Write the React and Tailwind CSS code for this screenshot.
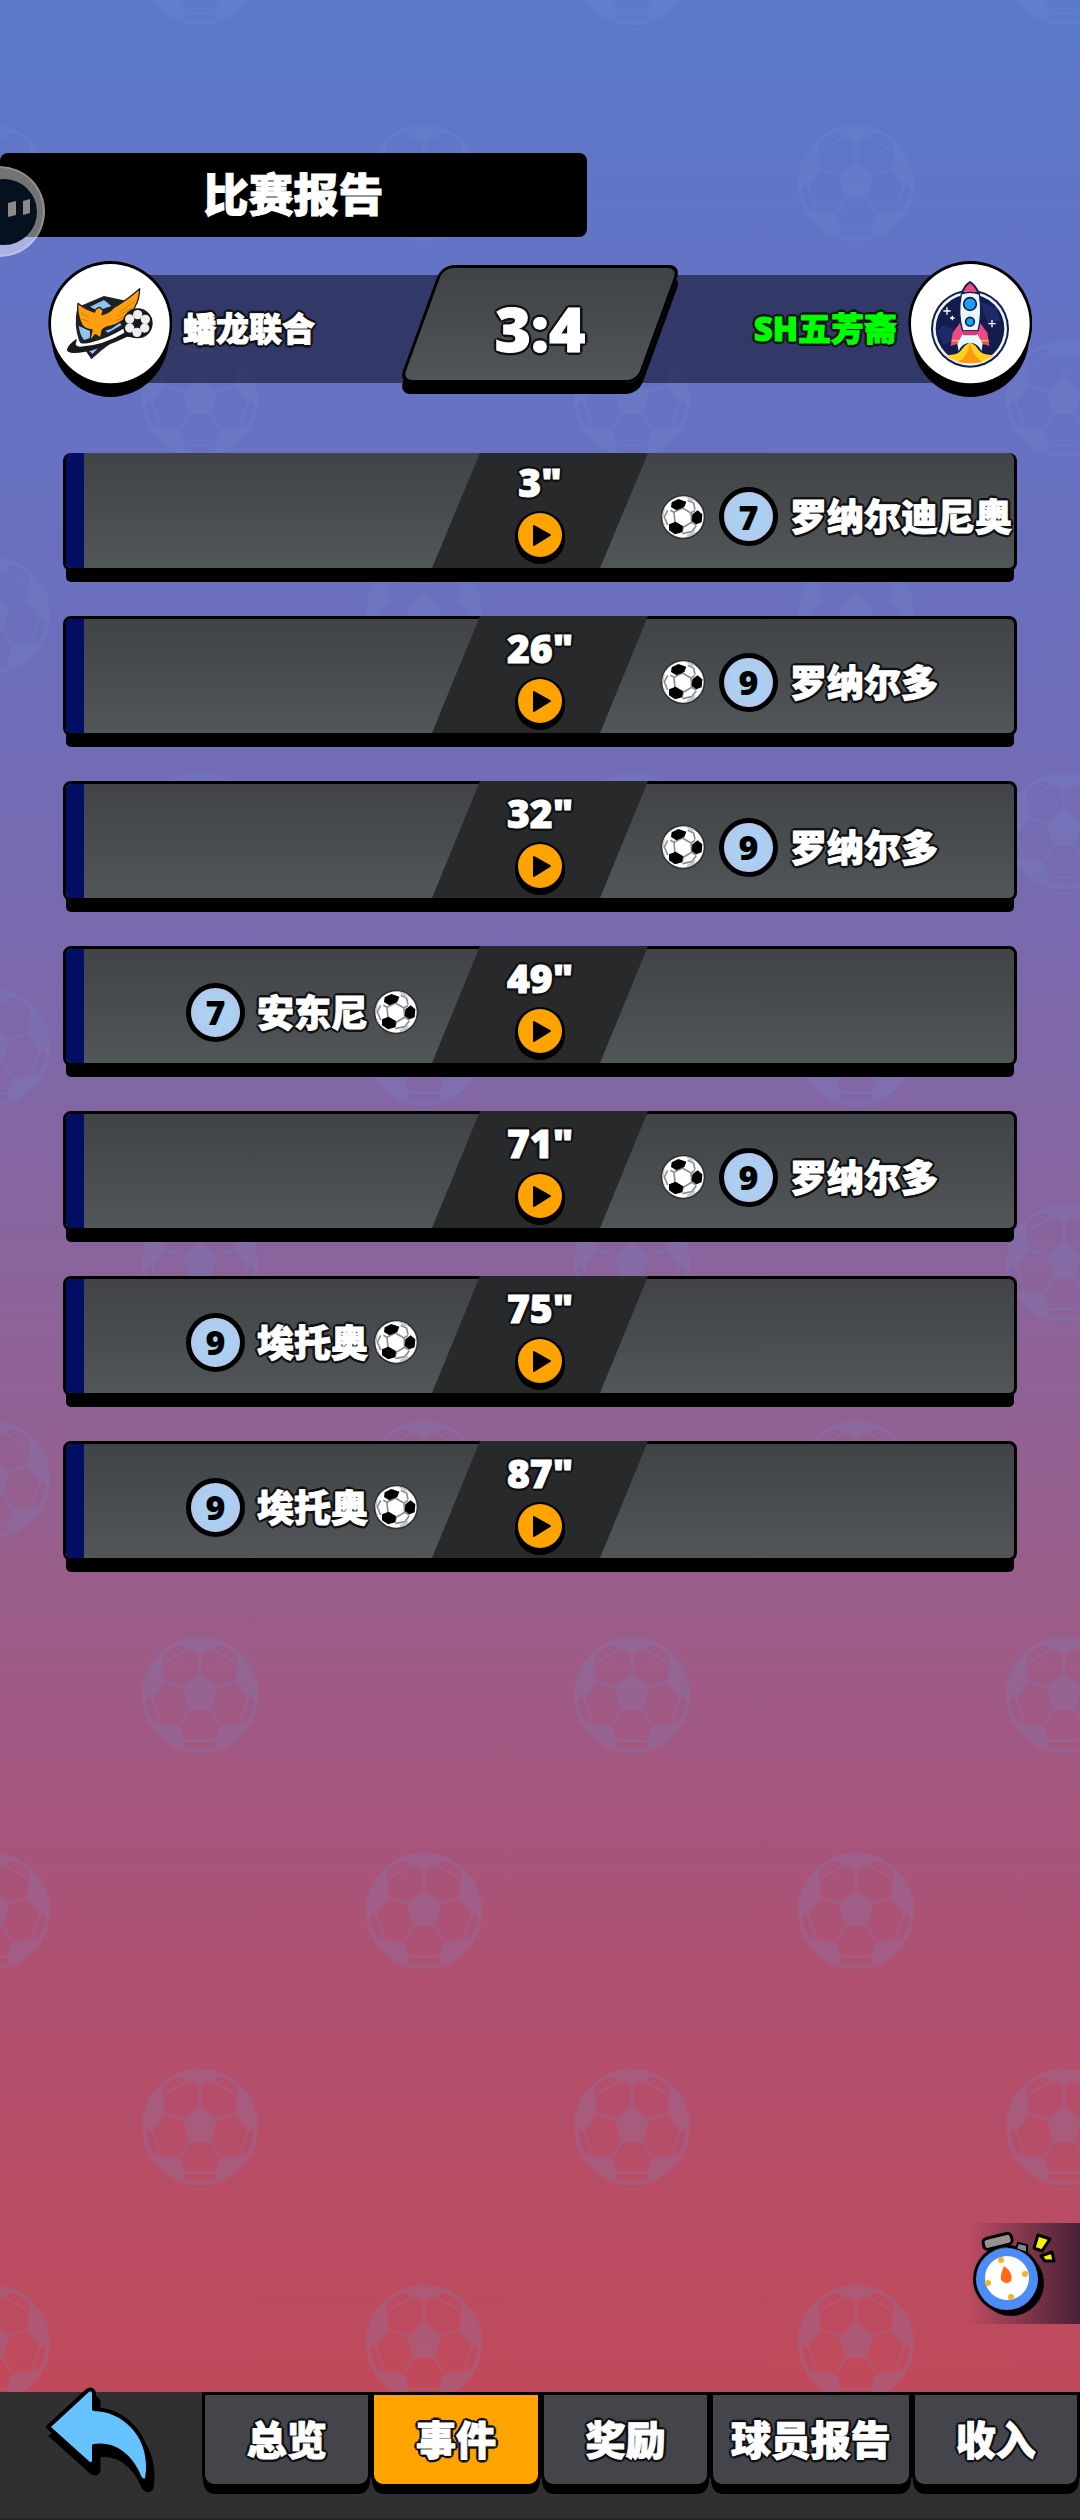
import React from 'react';
import clsx from 'clsx';

const events = [
  { minute: 3, side: 'away', number: 7, name: '罗纳尔迪尼奥' },
  { minute: 26, side: 'away', number: 9, name: '罗纳尔多' },
  { minute: 32, side: 'away', number: 9, name: '罗纳尔多' },
  { minute: 49, side: 'home', number: 7, name: '安东尼' },
  { minute: 71, side: 'away', number: 9, name: '罗纳尔多' },
  { minute: 75, side: 'home', number: 9, name: '埃托奥' },
  { minute: 87, side: 'home', number: 9, name: '埃托奥' },
];

const tabs = [
  { label: '总览', width: 'flex-[169]' },
  { label: '事件', width: 'flex-[169]', active: true },
  { label: '奖励', width: 'flex-[169]' },
  { label: '球员报告', width: 'flex-[202]' },
  { label: '收入', width: 'flex-[168]' },
];

// Fattens the glyphs a little and puts a dark rim around them
const outline =
  '[-webkit-text-stroke:1px_currentColor] [text-shadow:3px_0_#101114,-3px_0_#101114,0_3px_#101114,0_-3px_#101114,2px_2px_#101114,-2px_2px_#101114,2px_-2px_#101114,-2px_-2px_#101114]';

// One faint ball, drawn around its own centre
function FaintBall({ x, y }) {
  return (
    <g transform={`translate(${x} ${y})`}>
      <circle r="56" fill="none" stroke="#758fd0" strokeWidth="4" />
      <g fill="#758fd0">
        <path d="M0-21 17-8 11 15H-11L-17-8Z" />
        <path d="M-20-52Q0-60 20-52L12-46 0-42-12-46Z" />
        <path d="M37-40Q54-24 55 3L48 4 36-11Z" />
        <path d="M-37-40Q-54-24-55 3L-48 4-36-11Z" />
        <path d="M20 31 40 28 49 27Q38 48 18 54L14 46Z" />
        <path d="M-20 31-40 28-49 27Q-38 48-18 54L-14 46Z" />
      </g>
      <path
        d="M0-21V-43M17-8 37-14M-17-8-37-14M11 15 20 31M-11 15-20 31M-14 46H14M12-46 35-33M-12-46-35-33M48 4 40 28M-48 4-40 28"
        fill="none"
        stroke="#758fd0"
        strokeWidth="2"
      />
    </g>
  );
}

function BallPattern() {
  return (
    <svg className="absolute inset-0 h-full w-full opacity-20" aria-hidden="true">
      <defs>
        <pattern id="balls" width="432" height="432" patternUnits="userSpaceOnUse">
          <FaintBall x={424} y={183} />
          <FaintBall x={-8} y={183} />
          <FaintBall x={200} y={399} />
          <FaintBall x={200} y={-33} />
        </pattern>
      </defs>
      <rect width="100%" height="100%" fill="url(#balls)" />
    </svg>
  );
}

function Badge({ children }) {
  return (
    <svg viewBox="24 31 372 408" className="relative z-10 h-[136px] w-[124px] shrink-0" aria-hidden="true">
      <ellipse cx="211" cy="254" rx="177" ry="185" />
      <ellipse cx="211" cy="217" rx="186" ry="186" />
      <ellipse cx="211" cy="219" rx="178" ry="179" fill="#fff" />
      {children}
    </svg>
  );
}

function EagleLogo() {
  return (
    <Badge>
      <path d="M192 136 112 170Q100 225 118 272L154 326 186 298 262 240 258 150Z" fill="#1d2026" />
      <path d="M192 148 150 168 172 180 214 166Z" fill="#8fc4f2" />
      <path d="M116 226Q120 254 132 268L150 262 150 240ZM196 240 214 234 240 216 244 224 204 246ZM148 302 176 290 158 310Z" fill="#8fc4f2" />
      <path d="M110 264Q78 286 81 300 92 312 132 304 190 292 262 258L290 262 258 224Q200 258 140 282 104 290 110 264Z" fill="#17191d" />
      <path d="M114 268Q110 284 150 276 205 262 250 234L253 246Q190 284 120 288 98 286 114 268Z" fill="#fff" />
      <path
        d="M114 158Q138 178 164 184 166 172 180 170L190 180 186 192Q206 188 222 170 264 146 299 114 298 146 286 166 278 188 258 202 236 220 214 226 192 230 186 240L182 262 166 252 148 274 156 238Q128 236 122 214 110 184 114 158Z"
        fill="#ff9f10"
        stroke="#1d2026"
        strokeWidth="4"
        strokeLinejoin="round"
      />
      <path d="M240 184 284 152M232 198 276 172M228 210 258 194M124 186 144 198M126 206 146 212" stroke="#b96a06" strokeWidth="2" />
      <circle cx="293" cy="218" r="45" fill="#17191d" />
      <g fill="#eceef0">
        <circle cx="293" cy="192" r="14" />
        <circle cx="316" cy="206" r="14" />
        <circle cx="314" cy="232" r="14" />
        <circle cx="291" cy="245" r="14" />
        <circle cx="269" cy="232" r="14" />
        <circle cx="269" cy="205" r="14" />
      </g>
      <path d="M293 206 304 214 300 227H286L281 214Z" fill="#17191d" />
    </Badge>
  );
}

function RocketLogo() {
  return (
    <Badge>
      <circle cx="210" cy="234" r="117" fill="#141b4d" />
      <circle cx="210" cy="234" r="111" fill="#e8f6ff" />
      <circle cx="210" cy="234" r="103" fill="#141b4d" />
      <path d="M110 240 134 222 158 236V270L130 282ZM238 150 290 172 300 210 262 216Z" fill="#1d2a68" />
      <path d="M136 312Q172 316 184 298 196 280 210 276 226 280 236 298 250 316 284 312 254 338 210 338 166 338 136 312Z" fill="#ffd21f" />
      <path d="M174 334Q204 318 210 278 218 318 248 334 210 342 174 334Z" fill="#ff9a10" />
      <path d="M186 128Q192 106 210 94 228 106 236 128Z" fill="#e94b87" stroke="#141b4d" strokeWidth="6" strokeLinejoin="round" />
      <path d="M180 216 158 246 152 286 178 278 190 252ZM240 216 262 246 268 286 242 278 230 252Z" fill="#e94b87" />
      <path d="M155 270H180M240 270H266" stroke="#ffb21f" strokeWidth="5" />
      <path d="M188 250 172 280 176 302Q184 278 210 276 236 278 244 302L248 280 232 250Z" fill="#e8f6ff" />
      <path d="M184 130Q210 120 238 130 248 190 234 240H188Q172 190 184 130Z" fill="#e8f6ff" stroke="#141b4d" strokeWidth="4" />
      <path d="M186 240H234L230 254H190Z" fill="#d43c74" />
      <circle cx="210" cy="160" r="19" fill="#18a0f0" stroke="#141b4d" strokeWidth="5" />
      <circle cx="210" cy="213" r="13" fill="#18a0f0" stroke="#141b4d" strokeWidth="5" />
      <path d="M141 170V192M130 181H152M157 195V209M150 202H164M276 208V230M265 219H287" stroke="#fff" strokeWidth="4" />
    </Badge>
  );
}

function GoalBall() {
  return (
    <svg viewBox="-69 -69 138 138" className="size-[46px] shrink-0" role="img" aria-label="进球">
      <circle r="67" fill="#303236" />
      <circle r="62" fill="#fff" />
      <path
        d="M-27-14-2-27 24-12 26 16 2 30-24 18ZM-2-27 0-42M24-12 36-20M26 16 40 24M2 30-4 44M-24 18-32 24M-27-14-38-20M14-50 32-42 36-22M40 26 26 44-2 50M-46-20-56 0-46 24"
        fill="none"
        stroke="#8b8d90"
        strokeWidth="5"
      />
      <path d="M-34-44-14-54 10-46 4-30-20-20-36-30ZM28-8 44-20 58-8 56 16 40 22 26 12ZM-42 22-22 14 0 28-2 46-24 52-42 40Z" />
      <path d="M4-63Q26-60 38-50L26-48ZM-63-6-54-30-58 4ZM12 54 38 38 34 52Q24 60 12 61ZM-56 18-50 36-58 26Z" fill="#c3c5c8" />
    </svg>
  );
}

function Player({ number, name }) {
  return (
    <div className="flex items-center gap-3">
      <span className="flex size-[59px] shrink-0 items-center justify-center rounded-full border-[5px] border-black bg-[radial-gradient(circle,#abd0f2_45%,#bcbfe6_100%)] text-[34px] leading-none text-black">
        {number}
      </span>
      <span className={clsx('whitespace-nowrap text-[37px] leading-none text-white', outline)}>{name}</span>
    </div>
  );
}

function EventRow({ event, first }) {
  return (
    <li
      className={clsx(
        'grid grid-cols-[minmax(0,1fr)_216px_minmax(0,1fr)] rounded-lg border-[3px] border-black bg-linear-to-b from-[#414346] to-[#515659] shadow-[0_14px_0_-3px_#000,0_11px_0_-3px_#000]',
        first ? 'h-[118px] border-t-0' : 'h-[120px]'
      )}
    >
      <div className="flex rounded-l-md border-l-[18px] border-[#020e63]">
        {event.side === 'home' && (
          <div className="flex flex-1 items-center justify-end gap-[5px] pt-3 pr-[13px]">
            <Player number={event.number} name={event.name} />
            <GoalBall />
          </div>
        )}
      </div>
      <div
        className={clsx(
          'flex flex-col items-center gap-2 bg-[#28292b] [clip-path:polygon(48px_0,100%_0,168px_100%,0_100%)]',
          first ? 'pt-[9px]' : '-mt-[3px] pt-3'
        )}
      >
        <time className={clsx('text-[39px] leading-10 text-white', outline)}>{event.minute}"</time>
        <button type="button" aria-label="播放">
          <svg viewBox="0 0 52 54" className="h-[54px] w-[52px]" aria-hidden="true">
            <circle cx="26" cy="29" r="25" />
            <circle cx="26" cy="26" r="25" />
            <circle cx="26" cy="25" r="22" fill="#ffa300" />
            <path d="M20 16 36 25 20 35Z" stroke="#000" strokeWidth="2" strokeLinejoin="round" />
          </svg>
        </button>
      </div>
      <div className="flex">
        {event.side === 'away' && (
          <div className="flex items-center gap-[13px] pt-3 pl-3">
            <GoalBall />
            <Player number={event.number} name={event.name} />
          </div>
        )}
      </div>
    </li>
  );
}

function Stopwatch() {
  return (
    <svg viewBox="0 0 112 101" className="h-[101px] w-28" aria-hidden="true">
      <circle cx="43" cy="60" r="33" />
      <circle cx="39" cy="56" r="34" />
      <path d="M48 26 50 20 59 22V30Z" fill="#7d8a92" stroke="#000" strokeWidth="2" />
      <path d="M27 24H40V32H27Z" fill="#333" />
      <rect x="15" y="13" width="29" height="11" rx="4" transform="rotate(-14 29 18)" fill="#98918f" stroke="#000" strokeWidth="3" />
      <circle cx="39" cy="56" r="31" fill="#4d8bf5" />
      <circle cx="39" cy="55" r="22" fill="#fff" />
      <path d="M36 43Q46 50 43 58 38 63 33 57 32 52 36 43Z" fill="#ff6a13" />
      <g fill="#f5b51e">
        <circle cx="33" cy="37" r="3" />
        <circle cx="57" cy="51" r="3" />
        <circle cx="20" cy="60" r="3" />
        <circle cx="43" cy="74" r="3" />
      </g>
      <path d="M70 12 82 16 74 28 66 25ZM73 33 84 29 86 38 77 38Z" fill="#fff200" stroke="#000" strokeWidth="3" strokeLinejoin="round" />
    </svg>
  );
}

function BackArrow() {
  const d = 'M51 57 91 20Q96 18 97 23V39C125 40 152 62 151 100L150 109Q147 113 143 108C134 86 118 73 97 76V91Q96 96 91 93Z';
  return (
    <svg viewBox="46 16 116 112" className="-mt-1.5 h-28 w-[116px]" aria-hidden="true">
      <path d={d} transform="translate(4 9)" stroke="#000" strokeWidth="5" />
      <path d={d} fill="#66c3ff" stroke="#000" strokeWidth="4" strokeLinejoin="round" />
    </svg>
  );
}

export default function App() {
  return (
    <div className="relative flex min-h-screen flex-col overflow-hidden bg-[linear-gradient(#5a7acb,#6373c6_10%,#6b6fbe_24%,#7b69ad_38%,#9a5d88_64%,#a4567f_71%,#b05070_79%,#c04a5c_94%)] font-['Noto_Sans','Noto_Sans_CJK_SC',sans-serif] font-black">
      <BallPattern />

      <div className="relative flex flex-1 flex-col pt-[153px]">
        <h1 className="flex h-[84px] w-[587px] max-w-full items-center justify-center rounded-lg bg-black text-[45px] text-white [-webkit-text-stroke:1px_currentColor]">
          比赛报告
        </h1>

        {/* Scoreboard */}
        <section className="mt-6 flex items-center px-12">
          <EagleLogo />
          <div className="-mr-6 -ml-[62px] flex h-[108px] flex-1 items-center bg-[#00000c]/50 pl-[73px]">
            <span className={clsx('text-[33px] text-white', outline)}>蟠龙联合</span>
          </div>
          <div className="relative z-10 flex h-32 w-[240px] justify-center">
            <div className="absolute inset-x-0 top-0 h-[118px] -skew-x-[20deg] rounded-xl border-[3px] border-black bg-linear-to-b from-[#404345] to-[#525558] shadow-[4px_11px_0_#000]" />
            <span className={clsx('relative text-[62px] leading-[126px] text-white', outline)}>3:4</span>
          </div>
          <div className="-mr-[62px] -ml-6 flex h-[108px] flex-1 items-center justify-end bg-[#00000c]/50 pr-[73px]">
            <span className={clsx('text-[33px] text-[#0f0]', outline)}>SH五芳斋</span>
          </div>
          <RocketLogo />
        </section>

        <ul className="mx-[63px] mt-14 flex flex-col gap-[45px]">
          {events.map((event, i) => (
            <EventRow key={event.minute} event={event} first={i === 0} />
          ))}
        </ul>

        <button
          type="button"
          aria-label="计时"
          className="mt-auto mb-[68px] self-end bg-linear-to-r from-transparent to-[#4a2136]"
        >
          <Stopwatch />
        </button>
      </div>

      {/* Floating helper at the screen edge */}
      <button
        type="button"
        aria-label="助手"
        className="absolute top-[166px] -left-[46px] flex size-[91px] items-center justify-end rounded-full border-2 border-white/20 bg-white/45 pr-1.5"
      >
        <svg viewBox="0 0 66 66" className="size-[66px]" aria-hidden="true">
          <circle cx="33" cy="33" r="33" fill="#06111f" />
          <path d="M37 24 45 22V36L37 38ZM52 22 59 20V34L52 36Z" fill="#8a8a8a" />
        </svg>
      </button>

      <nav className="relative flex h-32 items-start border-b-2 border-[#262626] bg-[#303030]">
        <button type="button" aria-label="返回" className="flex w-[202px] justify-center">
          <BackArrow />
        </button>
        {tabs.map((tab) => (
          <button
            key={tab.label}
            type="button"
            className={clsx(
              'h-[95px] rounded-b-xl border-[3px] border-black text-[40px] whitespace-nowrap text-white shadow-[0_9px_0_-2px_#000,0_6px_0_-1px_#000]',
              tab.width,
              tab.active ? 'bg-[#ffa300]' : 'bg-[#43454a]'
            )}
          >
            <span className={outline}>{tab.label}</span>
          </button>
        ))}
      </nav>
    </div>
  );
}
